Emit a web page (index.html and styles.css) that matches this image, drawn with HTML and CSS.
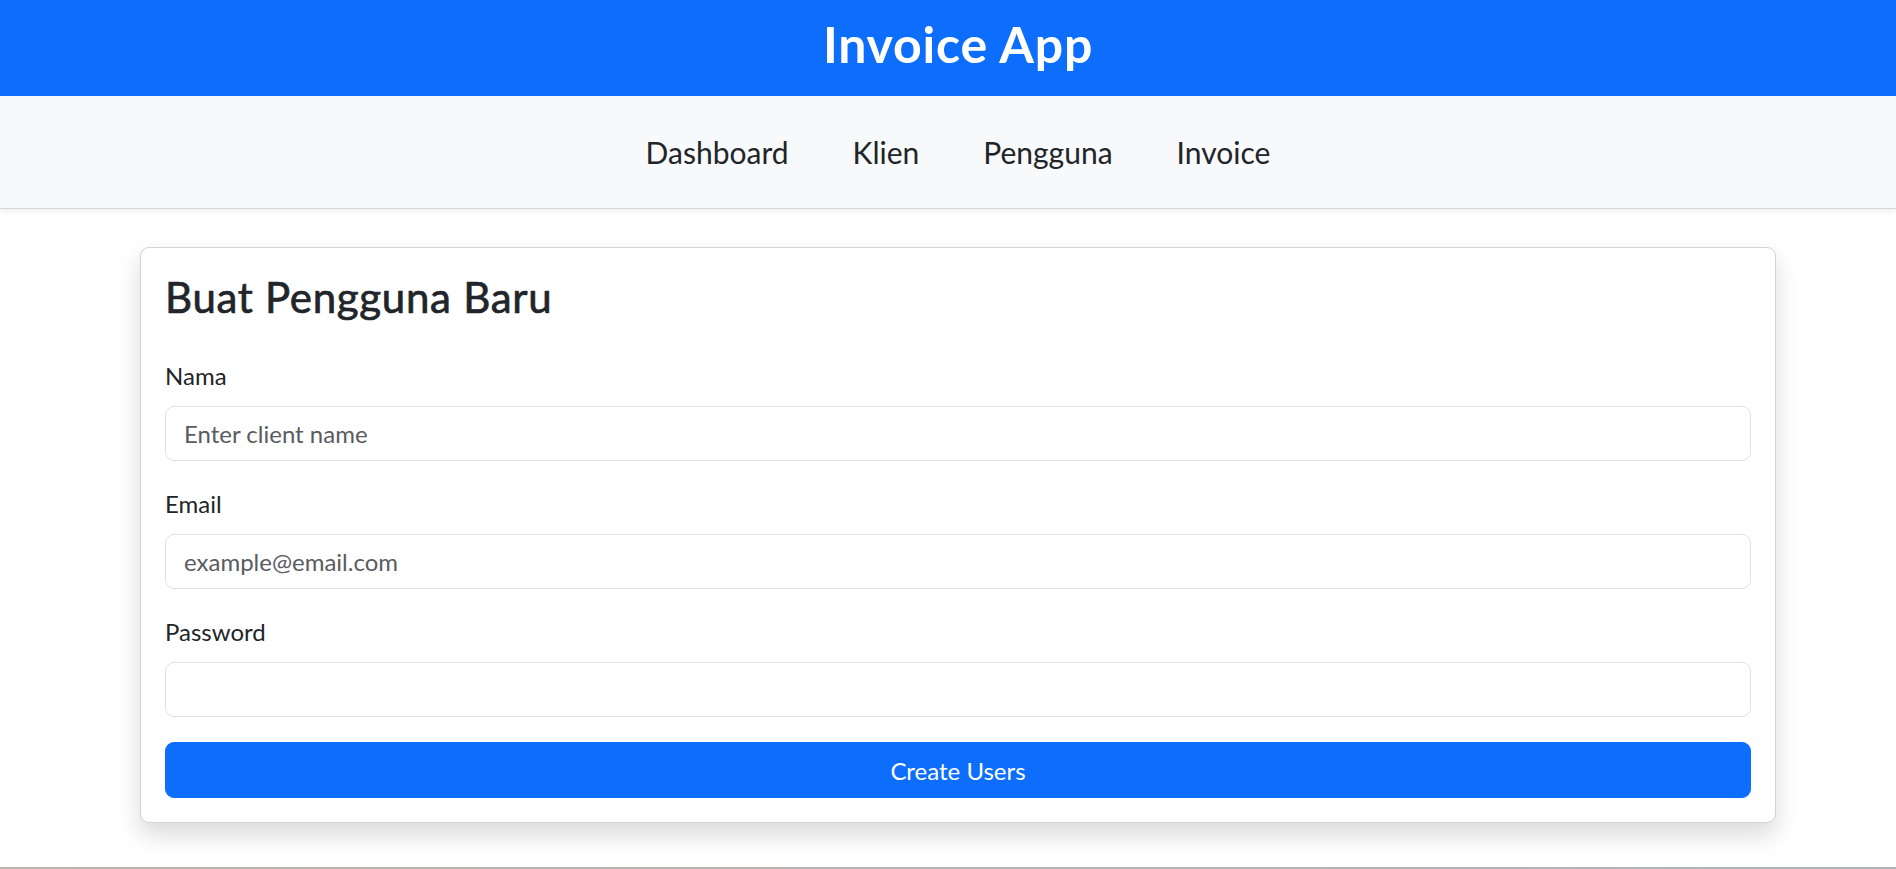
FILE: index.html
```html
<!DOCTYPE html>
<html lang="id">
<head>
<meta charset="utf-8">
<title>Invoice App</title>
<link rel="stylesheet" href="styles.css">
</head>
<body>
  <header class="app-header">
    <h1 class="app-title">Invoice App</h1>
  </header>
  <nav class="app-nav">
    <ul class="nav-list">
      <li><a class="nav-link" href="#">Dashboard</a></li>
      <li><a class="nav-link" href="#">Klien</a></li>
      <li><a class="nav-link" href="#">Pengguna</a></li>
      <li><a class="nav-link" href="#">Invoice</a></li>
    </ul>
  </nav>
  <main class="page">
    <section class="card">
      <h3 class="card-title">Buat Pengguna Baru</h3>
      <form class="form">
        <div class="field">
          <label class="field-label" for="nama">Nama</label>
          <input class="field-input" id="nama" type="text" placeholder="Enter client name">
        </div>
        <div class="field">
          <label class="field-label" for="email">Email</label>
          <input class="field-input" id="email" type="email" placeholder="example@email.com">
        </div>
        <div class="field">
          <label class="field-label" for="password">Password</label>
          <input class="field-input" id="password" type="password">
        </div>
        <button class="btn-primary" type="button">Create Users</button>
      </form>
    </section>
  </main>
  <div class="screen-edge"></div>
</body>
</html>
```

FILE: styles.css
```css
* {
  box-sizing: border-box;
}

html, body {
  margin: 0;
  padding: 0;
}

body {
  min-height: 100vh;
  display: flex;
  flex-direction: column;
  background: #ffffff;
  color: #212529;
  font-family: "Lato", "Noto Sans", "Liberation Sans", sans-serif;
  font-size: 24px;
  line-height: 1.5;
}

.app-header {
  background: #0d6efd;
  height: 96px;
  padding: 16px 0 0 20px;
  text-align: center;
}

.app-title {
  margin: 0;
  color: #ffffff;
  font-size: 50px;
  font-weight: 700;
  letter-spacing: 0.8px;
  line-height: 57.6px;
}

.app-nav {
  background: #f8f9fa;
  height: 113px;
  border-bottom: 1px solid #d6d7d8;
  box-shadow: 0 3px 6px rgba(0, 0, 0, 0.06);
  display: flex;
  align-items: center;
  justify-content: center;
  padding-left: 20px;
  position: relative;
  z-index: 1;
}

.nav-list {
  list-style: none;
  margin: 0;
  padding: 0;
  display: flex;
  gap: 64px;
}

.nav-link {
  color: #212529;
  text-decoration: none;
  font-size: 30px;
  line-height: 45px;
  display: block;
}

.page {
  flex: 1;
  padding: 38px 120px 0 140px;
}

.card {
  background: #ffffff;
  border: 1px solid #d3d4d5;
  border-radius: 9px;
  box-shadow: 0 12px 24px rgba(0, 0, 0, 0.15);
  padding: 24px;
}

.card-title {
  margin: 0 0 36px 0;
  font-size: 42px;
  font-weight: 400;
  -webkit-text-stroke: 0.7px #212529;
  letter-spacing: 0.7px;
  line-height: 50.4px;
  color: #212529;
}

.form {
  display: flex;
  flex-direction: column;
}

.field {
  display: flex;
  flex-direction: column;
  margin-bottom: 25px;
}

.field-label {
  display: block;
  font-size: 24px;
  line-height: 36px;
  margin-bottom: 12px;
}

.field-input {
  display: block;
  width: 100%;
  height: 55px;
  padding: 0 18px;
  font-family: inherit;
  font-size: 24px;
  color: #212529;
  background: #ffffff;
  border: 1px solid #dee2e6;
  border-radius: 9px;
  outline: none;
}

.field-input::placeholder {
  color: #595c5f;
  opacity: 1;
}

.btn-primary {
  display: block;
  width: 100%;
  height: 56px;
  margin: 0;
  font-family: inherit;
  font-size: 24px;
  color: #ffffff;
  background: #0d6efd;
  border: 1px solid #0d6efd;
  border-radius: 9px;
  cursor: pointer;
}

.screen-edge {
  height: 2px;
  background: linear-gradient(to right, #bcb3a9, #b4b2b4 60%, #aeb3b8);
}
```
